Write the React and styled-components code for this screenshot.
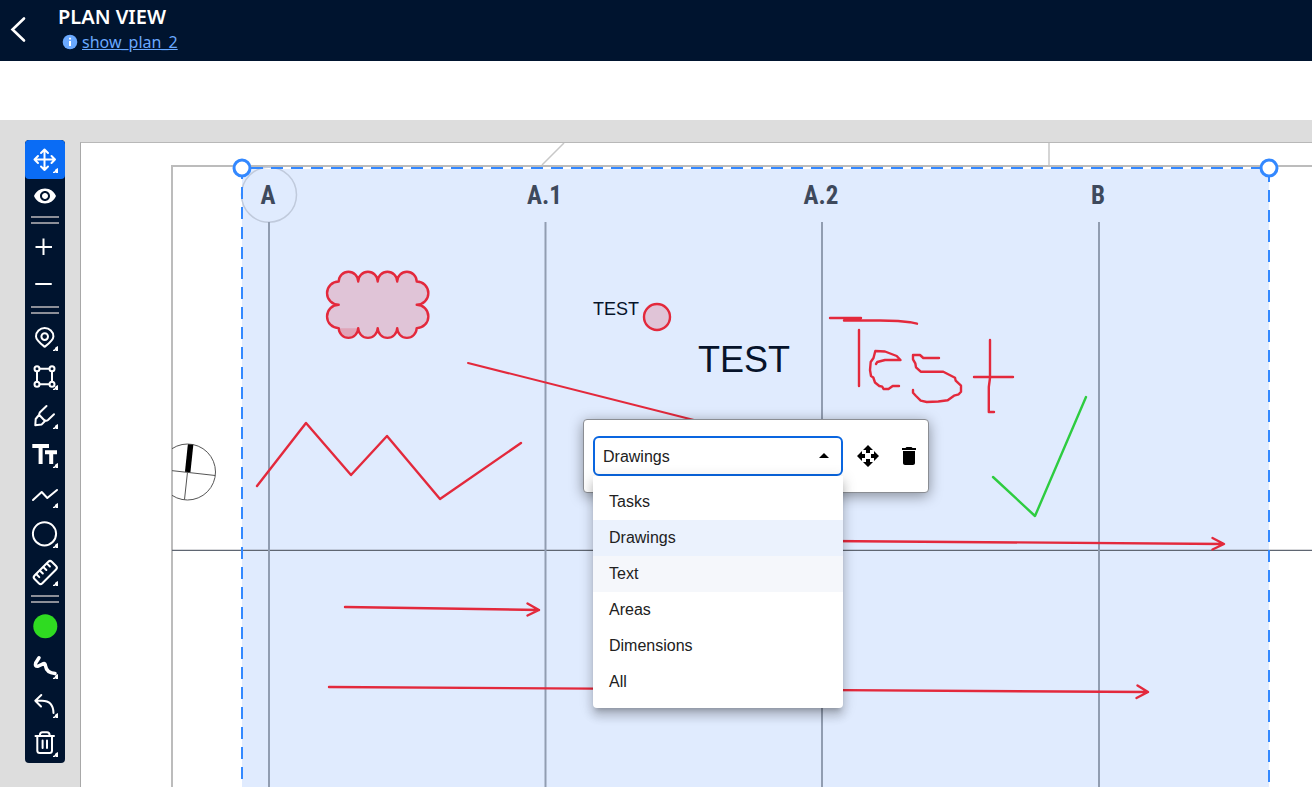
import React, { useState } from "react";
import styled, { createGlobalStyle } from "styled-components";
import { MdArrowDropUp, MdDelete, MdOpenWith, MdVisibility } from "react-icons/md";

const GlobalStyle = createGlobalStyle`
  *,
  *::before {
    box-sizing: border-box;
  }

  body {
    margin: 0;
    font-family: "Liberation Sans", Arial, sans-serif;
    font-size: 16px;
  }

  button {
    border: none;
    padding: 0;
    background: none;
    color: inherit;
    cursor: pointer;
  }
`;

const Page = styled.div`
  display: flex;
  flex-direction: column;
  height: 100vh;
  overflow: hidden;
  background-color: #fff;
`;

const Header = styled.header`
  display: flex;
  align-items: center;
  height: 61px;
  flex-shrink: 0;
  background-color: #00142f;
  color: #fff;
  font-family: "Noto Sans", sans-serif;
`;

const BackButton = styled.button`
  display: flex;
  width: 58px;
  height: 58px;
`;

const Title = styled.h1`
  margin: 0;
  font-size: 20px;
  font-weight: 600;
  line-height: 26px;
`;

const PlanLink = styled.a`
  display: flex;
  align-items: center;
  gap: 4px;
  padding: 0 0 4px 4px;
  color: #6aa9ff;
  font-size: 16px;
  line-height: 24px;
  text-decoration: none;

  span {
    text-decoration: underline;
  }
`;

const SubBar = styled.div`
  height: 59px;
  flex-shrink: 0;
`;

const Workspace = styled.main`
  display: flex;
  flex: 1;
  align-items: flex-start;
  gap: 15px;
  min-height: 0;
  padding: 20px 0 0 25px;
  background-color: #ddd;
`;

const Toolbar = styled.div`
  display: flex;
  flex-direction: column;
  width: 40px;
  flex-shrink: 0;
  border-radius: 4px;
  overflow: hidden;
  background-color: #00142f;
  color: #fff;
`;

const ToolButton = styled.button`
  display: flex;
  align-items: center;
  justify-content: center;
  height: ${({ $height }) => $height || 39}px;
  border-radius: 4px;
  background-color: ${({ $active }) => ($active ? "#0a6cf5" : "transparent")};
`;

const Separator = styled.div`
  height: 16px;
  padding: 4px 6px;

  &::before {
    content: "";
    display: block;
    height: 8px;
    border: solid #8c8f98;
    border-width: 2px 0;
  }
`;

const Sheet = styled.section`
  position: relative;
  flex: 1;
  align-self: stretch;
  min-width: 0;
  margin-top: 2px;
  border-top: 1px solid #b8b8b8;
  border-left: 1px solid #a8a8a8;
  background-color: #fff;
`;

const Drawing = styled.svg`
  display: block;
  width: 100%;
  height: 100%;
`;

const GridLabel = styled.text`
  fill: #3e495c;
  font-family: "Roboto Condensed", "Liberation Sans Narrow", Roboto, sans-serif;
  font-size: 25px;
  font-weight: 700;
  text-anchor: middle;
`;

const Note = styled.text`
  fill: #06132a;
  font-size: ${({ $size }) => $size}px;
`;

const Popup = styled.div`
  position: absolute;
  top: 276px;
  left: 502px;
  display: flex;
  align-items: center;
  gap: 9px;
  height: 74px;
  padding: 0 3px 0 9px;
  border: 1px solid #8a8d93;
  border-radius: 4px;
  background-color: #fff;
  box-shadow: 0 3px 14px rgba(0, 0, 0, 0.4);
`;

const Field = styled.div`
  position: relative;
  width: 250px;

  > svg {
    position: absolute;
    top: 8px;
    right: 7px;
    pointer-events: none;
  }
`;

const Select = styled.select`
  display: block;
  width: 100%;
  height: 40px;
  padding: 0 8px;
  border: 2px solid #0a66e0;
  border-radius: 6px;
  outline: none;
  appearance: none;
  background-color: #fff;
  color: #212121;
  font: inherit;
`;

const Menu = styled.ul`
  position: absolute;
  top: 100%;
  left: 0;
  width: 100%;
  margin: 0;
  padding: 8px 0;
  border-radius: 0 0 4px 4px;
  list-style: none;
  background-color: #fff;
  box-shadow: 0 5px 5px -3px rgba(0, 0, 0, 0.2), 0 8px 10px 1px rgba(0, 0, 0, 0.14),
    0 3px 14px 2px rgba(0, 0, 0, 0.12);
`;

const MenuItem = styled.button`
  display: block;
  width: 100%;
  height: 36px;
  padding: 0 16px;
  background-color: ${({ $selected, $hovered }) =>
    $selected ? "#ebf2fd" : $hovered ? "#f5f7fb" : "transparent"};
  color: #212121;
  font: inherit;
  text-align: left;
`;

const IconButton = styled.button`
  display: flex;
  align-items: center;
  justify-content: center;
  width: 32px;
  height: 32px;
  color: #000;
`;

// Toolbar glyph, `more` is the height of the small corner mark
function Glyph({ children, more, height = 39 }) {
  return (
    <svg
      width="40"
      height={height}
      viewBox={`0 0 40 ${height}`}
      fill="none"
      stroke="currentColor"
      strokeWidth="2"
      strokeLinecap="round"
      strokeLinejoin="round"
      aria-hidden="true"
    >
      {children}
      {more && (
        <g transform={`translate(28 ${more})`} stroke="none">
          <path d="M5 0L2.6 1.2L1.6 3.2L0 4V5H2.2L3 4V5H5Z" fill="currentColor" />
        </g>
      )}
    </svg>
  );
}

const tools = [
  {
    name: "Move",
    active: true,
    more: 28,
    icon: (
      <path d="M19.5 9.5V30M9.5 19.5H30M16 13L19.5 9.5L23 13M16 26.5L19.5 30L23 26.5M13 16L9.5 19.5L13 23M26.5 16L30 19.5L26.5 23" />
    ),
  },
  { name: "Visibility", height: 33, node: <MdVisibility size={24} /> },
  { separator: true },
  { name: "Zoom in", height: 37, icon: <path d="M18.5 10.5V27M10.5 19H27" strokeLinecap="butt" /> },
  { name: "Zoom out", height: 37, icon: <path d="M11 19H26" /> },
  { separator: true },
  {
    name: "Pin",
    more: 28,
    icon: (
      <>
        <path d="M19.7 28.8C15 25 11 22 11 18.4A8.7 8.3 0 0 1 28.4 18.4C28.4 22 24.4 25 19.7 28.8Z" />
        <circle cx="19.7" cy="18.6" r="3.3" />
      </>
    ),
  },
  {
    name: "Area",
    more: 28,
    icon: (
      <>
        <path d="M14.8 11.7H24.2M14.8 27.3H24.2M12 14.5V24.5M27 14.5V24.5" />
        <circle cx="12" cy="11.7" r="2.5" />
        <circle cx="27" cy="11.7" r="2.5" />
        <circle cx="12" cy="27.3" r="2.5" />
        <circle cx="27" cy="27.3" r="2.5" />
      </>
    ),
  },
  {
    name: "Marker",
    more: 28,
    icon: (
      <path d="M21.5 10L15 16.2Q14 17.5 14.3 19L19.3 24.2Q21.3 25.4 23 24L29 18.3M14 19L10.7 23L10.3 29.2L16.5 28.6L20 25" />
    ),
  },
  {
    name: "Text",
    more: 28,
    icon: <path d="M7.3 11H24M15.6 11V29M20 17.3H32M26.2 17.3V29" strokeWidth="4" strokeLinecap="butt" />,
  },
  { name: "Polyline", more: 29, icon: <path d="M8 26L16.7 18L22.3 24L32 16" /> },
  { name: "Circle", more: 30, icon: <circle cx="19.5" cy="20.8" r="11.6" /> },
  {
    name: "Measure",
    more: 29,
    icon: (
      <g transform="translate(20.3 20.5) rotate(-45)">
        <rect x="-12.2" y="-5.5" width="24.4" height="11" rx="2.5" />
        <path d="M-7.5 -5V-1M-2.5 -5V-1M2.5 -5V-1M7.5 -5V-1" />
      </g>
    ),
  },
  { separator: true },
  { name: "Color", icon: <circle cx="20.3" cy="19.3" r="12" fill="#2fdb21" stroke="none" /> },
  {
    name: "Line width",
    more: 28,
    icon: (
      <path
        d="M14 11.8L10.7 17Q9.6 20.6 13 20.3L18.5 17.6Q20 17 20.6 20.2Q21.5 26.5 30 27.5"
        strokeWidth="3.5"
      />
    ),
  },
  {
    name: "Undo",
    more: 28,
    icon: <path d="M16.3 10L10.3 15.8L16 21.5M10.3 15.8H17C24.3 15.8 28.3 20 28.5 28" />,
  },
  {
    name: "Delete",
    more: 28,
    icon: (
      <path d="M10.5 12H29M12.3 12V26.5Q12.3 29 14.8 29H24.5Q27 29 27 26.5V12M14.8 11.5Q15 8.3 17.5 8.3H22Q24.5 8.3 24.7 11.5M17.6 16.5V24M22 16.5V24" />
    ),
  },
];

const gridLines = [
  { label: "A", x: 269 },
  { label: "A.1", x: 545.5 },
  { label: "A.2", x: 822 },
  { label: "B", x: 1099 },
];

function Plan() {
  return (
    <Drawing role="img" aria-label="Plan drawing">
      <defs>
        <clipPath id="frame">
          <rect x="172" y="165" width="4000" height="4000" />
        </clipPath>
      </defs>
      <g transform="translate(-81 -143)" fill="none">
        <rect x="242" y="169" width="1027" height="3000" fill="#e0ebfe" />

        <path d="M172 4000V166H4000" stroke="#bcbcbc" strokeWidth="2" />
        <path d="M564 143L542 165M1049 143V165" stroke="#c8c8c8" strokeWidth="1.5" />
        <path d="M172 550.3H4000" stroke="#5f6672" strokeWidth="1.2" />

        <circle cx="269" cy="194.7" r="27.5" stroke="#c0cadc" strokeWidth="1.5" />
        {gridLines.map(({ label, x }) => (
          <g key={label}>
            <path d={`M${x} 222V4000`} stroke="#919db1" strokeWidth="2" />
            <GridLabel x={x - 1} y="204">
              {label}
            </GridLabel>
          </g>
        ))}

        <g clipPath="url(#frame)" stroke="#555" strokeWidth="1">
          <circle cx="187.5" cy="472" r="28" />
          <path d="M160 469.3L215.3 475.5M187.5 472L184.5 499.5" />
          <path d="M187.7 472L190.6 444.5" stroke="#000" strokeWidth="5.5" />
        </g>

        {/* annotations */}
        <g stroke="#e3293c" strokeWidth="2.4" strokeLinecap="round" strokeLinejoin="round">
          <path
            d="M338.7 281.5a9.75 9.75 0 0 1 19.5 0a9.75 9.75 0 0 1 19.5 0a9.75 9.75 0 0 1 19.5 0a9.75 9.75 0 0 1 19.5 0a11.6 11.6 0 0 1 0 23.3a11.6 11.6 0 0 1 0 23.3a9.75 9.75 0 0 1 -19.5 0a9.75 9.75 0 0 1 -19.5 0a9.75 9.75 0 0 1 -19.5 0a9.75 9.75 0 0 1 -19.5 0a11.6 11.6 0 0 1 0 -23.3a11.6 11.6 0 0 1 0 -23.3Z"
            fill="#e3293c"
            fillOpacity="0.2"
          />
          <path d="M338.7 328.2a9.75 9.75 0 0 0 19.5 0Z" fill="#e3293c" fillOpacity="0.2" stroke="none" />
          <circle cx="657" cy="317" r="13" fill="#e3293c" fillOpacity="0.2" />
          <path d="M257 486L306 423L351 475L387 436L440 499L521 443" />
          <path d="M468 363L690 419L800 447" strokeWidth="2" />
          <path d="M345 607L539 610M527.5 603.5L539 610L527.5 615.5" />
          <path d="M700 540L1223 544M1212.5 538L1224 544L1212.5 549.5" />
          <path d="M329 687L1147 692M1137.5 685.5L1148 692L1136.5 698" />
          <path d="M830 318H861M844 320.5H880L898 321L910 322.2L917 323.7M859 330V386" />
          <path d="M876 364L877.3 362L885 360H900.5L896.7 356L885 351.5L875.3 351L873.5 358L870.7 362L870 370L871 376L873.3 377.5L875 382.5L879.3 386L882.3 386.7L883.5 389H888.5L892.7 386L899 386" />
          <path d="M939 358H923.3L920 355H913V359.3L915.3 363.3L916 367.3L920.7 371.7H943.3L955 377.7L955.7 380.7L961 385.7V391.7L958.7 394.3L954 395.7L947.7 400.3L938.3 401.5L926.7 402L920.7 400.7L916 396L913 392.7V390" />
          <path d="M990 340V378L988.8 387V412H994M974 377H1013" />
        </g>
        <path
          d="M993 477L1035 516L1086 397"
          stroke="#2ecc40"
          strokeWidth="2.4"
          strokeLinecap="round"
          strokeLinejoin="round"
        />
        <Note x="593" y="315" $size={18}>
          TEST
        </Note>
        <Note x="698" y="372" $size={36}>
          TEST
        </Note>

        {/* selection */}
        <g stroke="#3388ff" strokeWidth="2" strokeDasharray="12 8">
          <path d="M251 168H1269" />
          <path d="M242 167V4000" />
          <path d="M1269 170V4000" />
        </g>
        <g fill="#fff" stroke="#3388ff" strokeWidth="3">
          <circle cx="242" cy="168" r="8" />
          <circle cx="1269" cy="168" r="8" />
        </g>
      </g>
    </Drawing>
  );
}

const layers = ["Tasks", "Drawings", "Text", "Areas", "Dimensions", "All"];

function App() {
  const [layer, setLayer] = useState("Drawings");
  const [hovered, setHovered] = useState("Text");

  return (
    <Page>
      <GlobalStyle />
      <Header>
        <BackButton aria-label="Back">
          <svg width="58" height="58" fill="none" stroke="#fff" strokeWidth="2.6">
            <path d="M24 16.5L12.5 27.5L24 38.5" strokeLinecap="round" />
          </svg>
        </BackButton>
        <div>
          <Title>PLAN VIEW</Title>
          <PlanLink href="#plan">
            <svg width="16" height="16" viewBox="0 0 16 16" aria-hidden="true">
              <circle cx="8" cy="8" r="7.3" fill="#6aa9ff" />
              <path d="M8 3.8V5.6M8 7V12" stroke="#fff" strokeWidth="2" />
            </svg>
            <span>show_plan_2</span>
          </PlanLink>
        </div>
      </Header>
      <SubBar />
      <Workspace>
        <Toolbar role="toolbar" aria-label="Plan tools">
          {tools.map((tool, index) =>
            tool.separator ? (
              <Separator key={index} />
            ) : (
              <ToolButton key={index} aria-label={tool.name} $height={tool.height} $active={tool.active}>
                {tool.node || (
                  <Glyph more={tool.more} height={tool.height}>
                    {tool.icon}
                  </Glyph>
                )}
              </ToolButton>
            )
          )}
        </Toolbar>
        <Sheet>
          <Plan />
          <Popup>
            <Field>
              <Select aria-label="Layer" value={layer} onChange={(event) => setLayer(event.target.value)}>
                {layers.map((name) => (
                  <option key={name}>{name}</option>
                ))}
              </Select>
              <MdArrowDropUp size={24} />
              <Menu>
                {layers.map((name) => (
                  <li key={name}>
                    <MenuItem
                      $selected={name === layer}
                      $hovered={name === hovered}
                      onMouseEnter={() => setHovered(name)}
                      onClick={() => setLayer(name)}
                    >
                      {name}
                    </MenuItem>
                  </li>
                ))}
              </Menu>
            </Field>
            <IconButton aria-label="Move selection">
              <MdOpenWith size={24} />
            </IconButton>
            <IconButton aria-label="Delete selection">
              <MdDelete size={24} />
            </IconButton>
          </Popup>
        </Sheet>
      </Workspace>
    </Page>
  );
}

export default App;
